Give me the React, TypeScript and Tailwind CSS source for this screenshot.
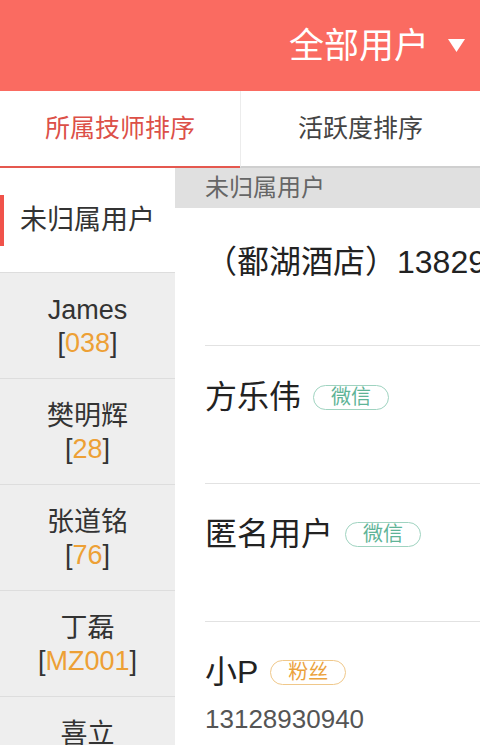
const techs = [
  { name: "James", code: "038" },
  { name: "樊明辉", code: "28" },
  { name: "张道铭", code: "76" },
  { name: "丁磊", code: "MZ001" },
  { name: "喜立", code: "" },
];

type Row = { name: string; tag?: "wx" | "fans"; phone?: string; top?: string };

const rows: Row[] = [
  { name: "（鄱湖酒店）13829630871", top: "pt-[34px]" },
  { name: "方乐伟", tag: "wx", top: "pt-[31px]" },
  { name: "匿名用户", tag: "wx", top: "pt-[30px]" },
  { name: "小P", tag: "fans", phone: "13128930940", top: "pt-[30px]" },
];

function Tag({ kind }: { kind: "wx" | "fans" }) {
  if (kind === "wx") {
    return (
      <span className="ml-[12px] h-[25px] px-[17px] flex items-center rounded-full border border-[#9fd3c0] text-[#5fb497] text-[20px] leading-none shrink-0">
        微信
      </span>
    );
  }
  return (
    <span className="ml-[12px] h-[25px] px-[17px] flex items-center rounded-full border border-[#f0c88a] text-[#eba23c] text-[20px] leading-none shrink-0">
      粉丝
    </span>
  );
}

export default function App() {
  return (
    <div className="w-[480px] h-[745px] overflow-hidden bg-white font-['Liberation_Sans','Noto_Sans_CJK_SC',sans-serif]">
      {/* header */}
      <div className="h-[91px] bg-[#fa6b61] flex items-center justify-end pr-[15px]">
        <span className="text-white text-[35px] leading-none">全部用户</span>
        <svg width="17" height="13" viewBox="0 0 17 13" className="ml-[19px]">
          <polygon points="0,0 17,0 8.5,13" fill="#fff" />
        </svg>
      </div>

      {/* tabs */}
      <div className="h-[77px] flex">
        <div className="w-[240px] flex items-center justify-center border-b-2 border-[#e5584f] text-[#dc5048] text-[25px]">
          所属技师排序
        </div>
        <div className="flex-1 flex items-center justify-center border-l border-[#ececec] border-b-2 border-b-[#cfcfcf] text-[#444] text-[25px]">
          活跃度排序
        </div>
      </div>

      <div className="flex">
        {/* sidebar */}
        <div className="w-[175px] shrink-0 bg-[#eeeeee]">
          <div className="h-[105px] bg-white flex items-center relative border-b border-[#dddddd]">
            <div className="absolute left-0 top-[27px] w-[4px] h-[51px] bg-[#f0524a]" />
            <span className="pl-[20px] text-[27px] text-[#333]">未归属用户</span>
          </div>
          {techs.map((t) => (
            <div
              key={t.name}
              className="h-[106px] pt-[2px] flex flex-col items-center justify-center border-b border-[#dddddd] text-[27px] leading-[33px] text-[#333]"
            >
              <span>{t.name}</span>
              {t.code ? (
                <span>
                  [<span className="text-[#eda035]">{t.code}</span>]
                </span>
              ) : (
                <span>&nbsp;</span>
              )}
            </div>
          ))}
        </div>

        {/* list */}
        <div className="flex-1 min-w-0 overflow-hidden">
          <div className="h-[40px] bg-[#e0e0e0] flex items-center pl-[30px] text-[24px] text-[#666]">
            未归属用户
          </div>
          {rows.map((r) => (
            <div key={r.name} className="pl-[30px]">
              <div className={`h-[138px] border-b border-[#e2e2e2] flex flex-col ${r.top}`}>
                <div className="h-[40px] flex items-center whitespace-nowrap text-[32px] text-[#222]">
                  <span>{r.name}</span>
                  {r.tag && <Tag kind={r.tag} />}
                </div>
                {r.phone && (
                  <div className="mt-[12px] h-[30px] flex items-center text-[26px] text-[#555]">
                    {r.phone}
                  </div>
                )}
              </div>
            </div>
          ))}
        </div>
      </div>
    </div>
  );
}
